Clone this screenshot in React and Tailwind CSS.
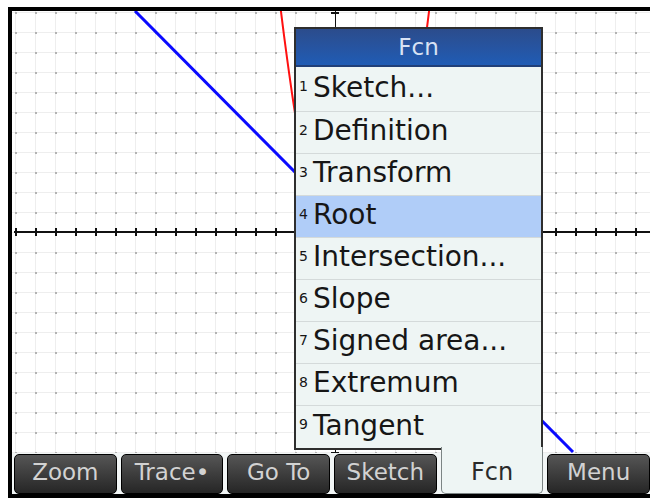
import React from 'react';

const items = [
  ['1', 'Sketch...'],
  ['2', 'Definition'],
  ['3', 'Transform'],
  ['4', 'Root'],
  ['5', 'Intersection...'],
  ['6', 'Slope'],
  ['7', 'Signed area...'],
  ['8', 'Extremum'],
  ['9', 'Tangent'],
];

const softkeys = ['Zoom', 'Trace•', 'Go To', 'Sketch', 'Fcn', 'Menu'];

// graph: grid every 20px, axes, a line and a parabola (coords local to plot)
function Plot() {
  const xs = Array.from({ length: 32 }, (_, k) => 3 + 20 * k);
  const ys = Array.from({ length: 23 }, (_, k) => 1 + 20 * k);
  const red = [];
  for (let x = 270; x <= 440; x++) {
    const y = 308 - 0.0541 * (x - 355) ** 2;
    red.push(`${x - 12},${(y - 11).toFixed(1)}`);
  }
  return (
    <svg width="638" height="442" viewBox="0 0 638 442" className="block">
      <g shapeRendering="crispEdges">
        {xs.map(x => <rect key={'v' + x} x={x} y={0} width={1} height={442} fill="#eeeeee" />)}
        {ys.map(y => <rect key={'h' + y} x={0} y={y} width={638} height={1} fill="#eeeeee" />)}
        {xs.map(x => ys.map(y => <rect key={x + '-' + y} x={x - 0.5} y={y - 0.5} width={2} height={2} fill="#b2b2b2" />))}
        <rect x={2} y={220} width={636} height={2} fill="#111" />
        {xs.map(x => <rect key={'t' + x} x={x - 0.5} y={217} width={2} height={8} fill="#111" />)}
        <rect x={322.5} y={0} width={1.5} height={442} fill="#111" />
        {ys.map(y => <rect key={'ty' + y} x={319} y={y - 0.5} width={8} height={2} fill="#111" />)}
      </g>
      <polyline points={red.join(' ')} fill="none" stroke="#ff1010" strokeWidth="2" />
      <line x1={123} y1={0} x2={561} y2={441} stroke="#0a0aff" strokeWidth="3" />
    </svg>
  );
}

export default function App() {
  return (
    <div className="w-[650px] h-[498px] bg-white relative overflow-hidden font-['DejaVu_Sans',sans-serif]">
      <div className="ml-[8px] mt-[7px] border-l-4 border-t-4 border-b-4 border-black flex flex-col">
        <div className="h-[442px] bg-white overflow-hidden">
          <Plot />
        </div>
        <div className="h-[41px] bg-[#f2f6f6] grid grid-cols-6 gap-[4px] pl-[2px] pt-[1px] pb-[2px]">
          {softkeys.map(k => k === 'Fcn' ? (
            <div key={k} className="relative z-10 -mt-[7px] bg-[#eef5f4] border-x border-b border-[#7c8484] rounded-b-[5px] flex items-center justify-center pt-[5px] text-[24px] text-[#2a2a2a]">
              {k}
            </div>
          ) : (
            <div key={k} className="rounded-[5px] border border-black bg-gradient-to-b from-[#565656] to-[#262626] flex items-center justify-center pb-[3px] text-[23px] text-[#d2d2d2]">
              {k}
            </div>
          ))}
        </div>
      </div>

      {/* Fcn popup menu */}
      <div className="absolute left-[294px] top-[27px] w-[249px] border-2 border-[#2e2e2e] bg-[#eef5f4]">
        <div className="h-[38px] border-b-2 border-[#203f78] bg-gradient-to-b from-[#2b4c8c] to-[#1f5cb5] flex items-center justify-center text-[23px] text-[#d8e2f4]">
          Fcn
        </div>
        {items.map(([n, label], i) => (
          <div
            key={n}
            className={`${i === 0 ? 'h-[45px]' : 'h-[42px]'} ${i === 3 ? 'bg-[#b0cdf8]' : ''} ${i < 8 ? 'border-b border-[#d4dada]' : ''} flex items-center pl-[3px] pb-[3px] text-[#161616]`}
          >
            <span className="w-[14px] text-[14px] leading-none -mt-[3px]">{n}</span>
            <span className="text-[28px] leading-none">{label}</span>
          </div>
        ))}
      </div>
    </div>
  );
}
